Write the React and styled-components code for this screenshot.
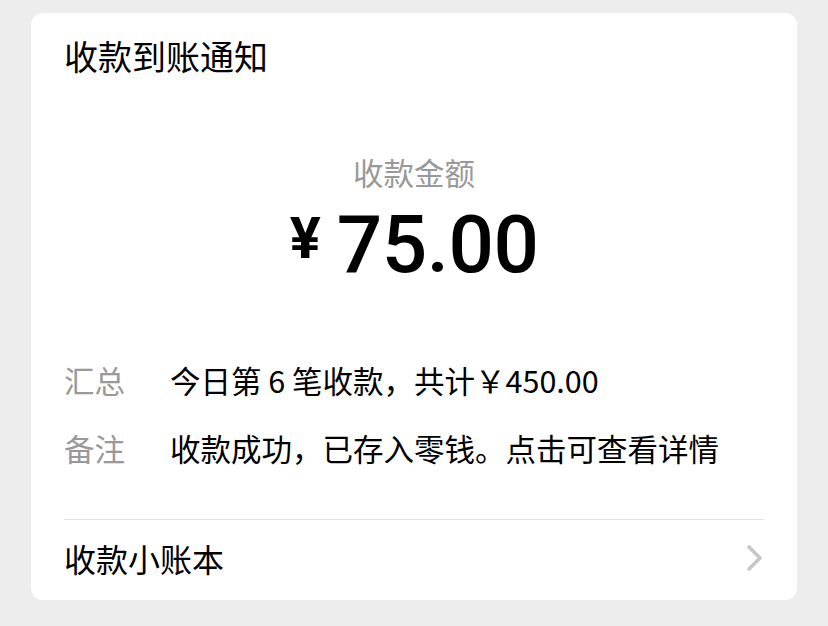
import React from "react";
import styled, { createGlobalStyle } from "styled-components";

const Global = createGlobalStyle`
  html, body { margin: 0; padding: 0; background: #ededed; }
  body { font-family: "Noto Sans CJK SC", "Noto Sans", sans-serif; }
`;

const Page = styled.div`
  width: 828px;
  height: 626px;
  box-sizing: border-box;
  padding: 13px 31px 0 31px;
  background: #ededed;
`;

const Card = styled.div`
  background: #ffffff;
  border-radius: 12px;
  padding: 0 33px;
  height: 587px;
  box-sizing: border-box;
  display: flex;
  flex-direction: column;
`;

const Title = styled.div`
  margin-top: 23px;
  font-size: 34px;
  line-height: 40px;
  color: #000;
`;

const AmountLabel = styled.div`
  margin-top: 76px;
  text-align: center;
  font-size: 30.5px;
  line-height: 40px;
  color: #999;
`;

const Amount = styled.div`
  margin-top: 8px;
  height: 90px;
  display: flex;
  align-items: center;
  justify-content: center;
  gap: 16px;
  color: #000;
`;

const Currency = styled.span`
  font-family: Roboto, "Noto Sans", sans-serif;
  font-weight: 700;
  font-size: 58px;
  line-height: 1;
  margin-top: -14px;
`;

const Number = styled.span`
  font-family: Roboto, "Noto Sans", sans-serif;
  font-weight: 500;
  font-size: 80px;
  line-height: 1;
  letter-spacing: -0.5px;
`;

const Rows = styled.div`
  margin-top: 68px;
  display: flex;
  flex-direction: column;
  gap: 24px;
`;

const Row = styled.div`
  display: grid;
  grid-template-columns: 106px 1fr;
  font-size: 30.5px;
  line-height: 44px;
`;

const RowLabel = styled.span`
  color: #999;
`;

const RowValue = styled.span`
  color: #000;
`;

const Divider = styled.div`
  margin-top: 49px;
  height: 1px;
  background: #e2e2e2;
`;

const Footer = styled.div`
  height: 76px;
  display: flex;
  align-items: center;
  justify-content: space-between;
  font-size: 32px;
  color: #000;
`;

const Chevron = () => (
  <svg width="18" height="28" viewBox="0 0 18 28">
    <path d="M3 3 L14 14 L3 25" fill="none" stroke="#c7c7c7" strokeWidth="3.6" strokeLinecap="round" strokeLinejoin="round" />
  </svg>
);

export default function App() {
  return (
    <>
      <Global />
      <Page>
        <Card>
          <Title>收款到账通知</Title>
          <AmountLabel>收款金额</AmountLabel>
          <Amount>
            <Currency>¥</Currency>
            <Number>75.00</Number>
          </Amount>
          <Rows>
            <Row>
              <RowLabel>汇总</RowLabel>
              <RowValue>今日第 6 笔收款，共计￥450.00</RowValue>
            </Row>
            <Row>
              <RowLabel>备注</RowLabel>
              <RowValue>收款成功，已存入零钱。点击可查看详情</RowValue>
            </Row>
          </Rows>
          <Divider />
          <Footer>
            <span>收款小账本</span>
            <Chevron />
          </Footer>
        </Card>
      </Page>
    </>
  );
}
